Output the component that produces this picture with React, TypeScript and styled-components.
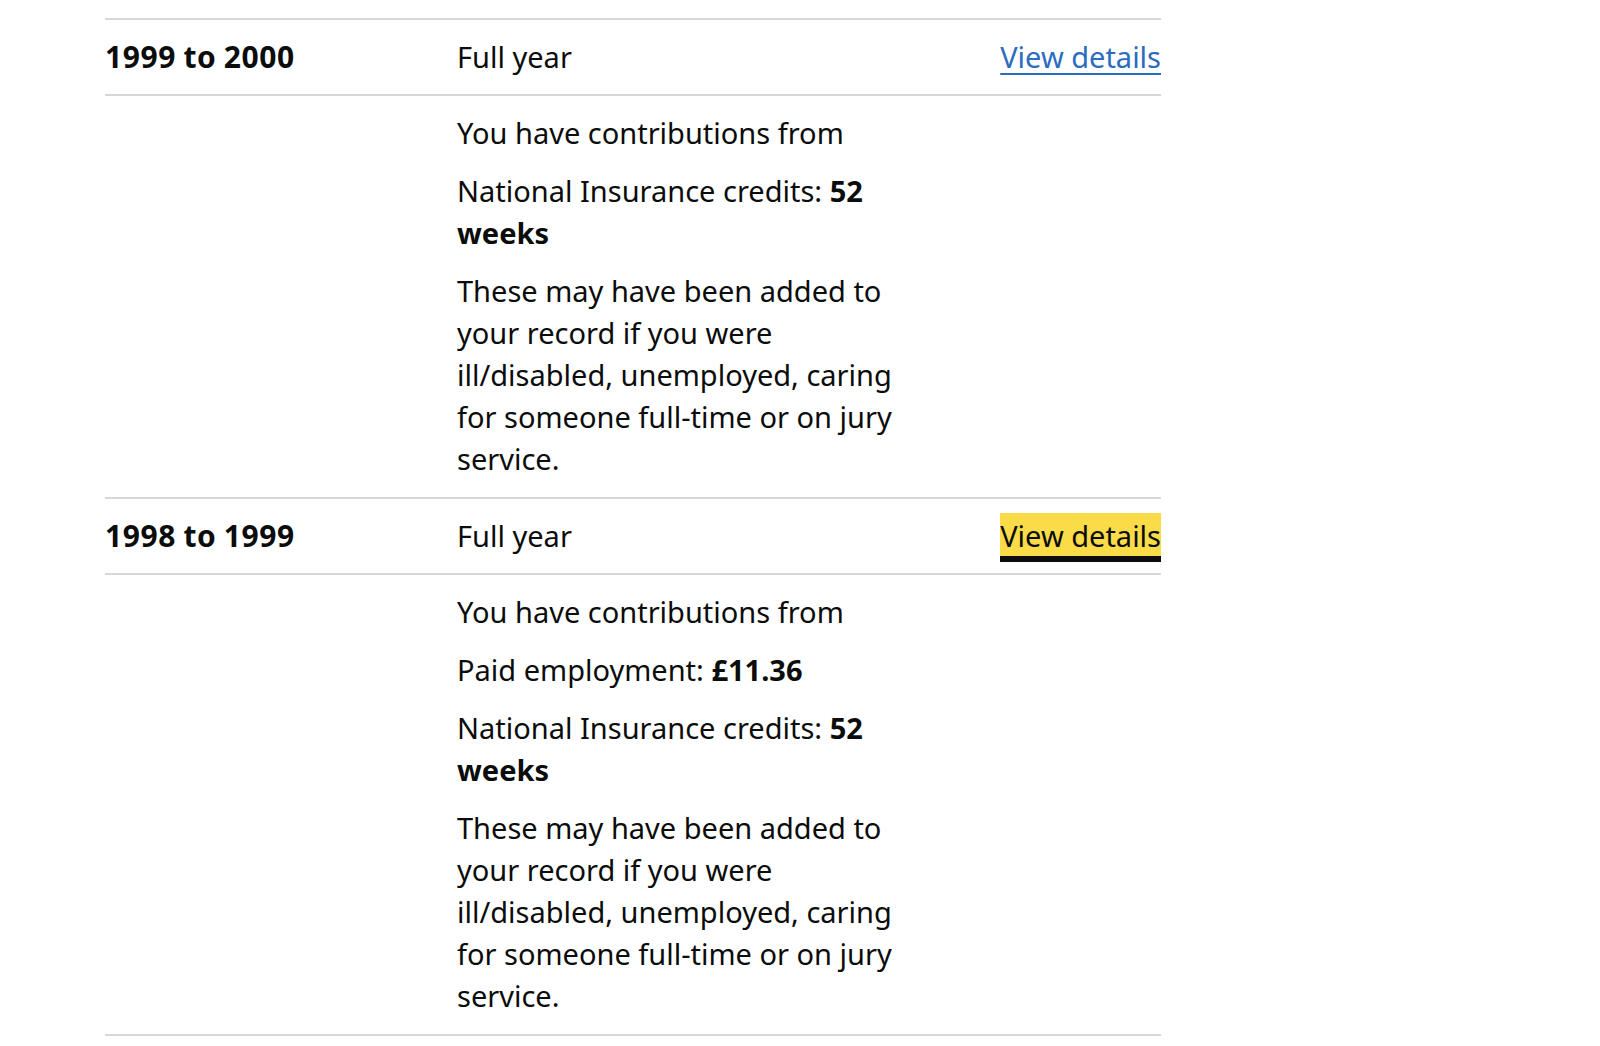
import React from 'react';
import styled, { createGlobalStyle } from 'styled-components';

interface YearRecord {
  period: string;
  status: string;
  focused?: boolean;
  contributions: React.ReactNode[];
}

const GlobalStyle = createGlobalStyle`
  html, body {
    margin: 0;
    padding: 0;
    background: #ffffff;
  }
  body {
    font-family: 'Noto Sans', 'Open Sans', Arial, sans-serif;
    color: #0b0c0c;
    -webkit-font-smoothing: antialiased;
  }
`;

const Page = styled.main`
  padding: 18px 0 0 105px;
`;

const List = styled.div`
  width: 1056px;
  border-top: 2px solid #d6d7d8;
`;

const SummaryRow = styled.div`
  display: grid;
  grid-template-columns: 352px 1fr auto;
  align-items: start;
  padding: 16px 0;
  border-bottom: 2px solid #d6d7d8;
  font-size: 29px;
  line-height: 42px;
`;

const Period = styled.div`
  font-weight: 700;
  font-size: 30px;
  letter-spacing: 0.6px;
  word-spacing: -1px;
`;

const Status = styled.div``;

const DetailsLink = styled.a<{ $focused?: boolean }>`
  display: inline-block;
  line-height: 40px;
  color: ${p => (p.$focused ? '#0b0c0c' : '#2b6cbf')};
  background: ${p => (p.$focused ? '#fadb48' : 'transparent')};
  box-shadow: ${p => (p.$focused ? '0 -3px #fadb48, 0 6px #0b0c0c' : 'none')};
  text-decoration: ${p => (p.$focused ? 'none' : 'underline')};
  text-decoration-thickness: 2px;
  text-underline-offset: 5px;
  cursor: pointer;
`;

const DetailsRow = styled.div`
  display: grid;
  grid-template-columns: 352px 1fr;
  padding: 16px 0 17px;
  border-bottom: 2px solid #d6d7d8;
  font-size: 29px;
  line-height: 42px;
`;

const DetailsBody = styled.div`
  grid-column: 2;
  max-width: 462px;
`;

const Para = styled.p`
  margin: 0 0 16px;

  &:last-child {
    margin-bottom: 0;
  }

  strong {
    font-weight: 700;
  }
`;

const creditsNote =
  'These may have been added to your record if you were ill/disabled, unemployed, caring for someone full-time or on jury service.';

const records: YearRecord[] = [
  {
    period: '1999 to 2000',
    status: 'Full year',
    contributions: [
      <>
        National Insurance credits: <strong>52 weeks</strong>
      </>
    ]
  },
  {
    period: '1998 to 1999',
    status: 'Full year',
    focused: true,
    contributions: [
      <>
        Paid employment: <strong>£11.36</strong>
      </>,
      <>
        National Insurance credits: <strong>52 weeks</strong>
      </>
    ]
  }
];

const App: React.FC = () => (
  <>
    <GlobalStyle />
    <Page>
      <List>
        {records.map(record => (
          <React.Fragment key={record.period}>
            <SummaryRow>
              <Period>{record.period}</Period>
              <Status>{record.status}</Status>
              <div>
                <DetailsLink $focused={record.focused}>View details</DetailsLink>
              </div>
            </SummaryRow>
            <DetailsRow>
              <DetailsBody>
                <Para>You have contributions from</Para>
                {record.contributions.map((item, i) => (
                  <Para key={i}>{item}</Para>
                ))}
                <Para>{creditsNote}</Para>
              </DetailsBody>
            </DetailsRow>
          </React.Fragment>
        ))}
      </List>
    </Page>
  </>
);

export default App;
